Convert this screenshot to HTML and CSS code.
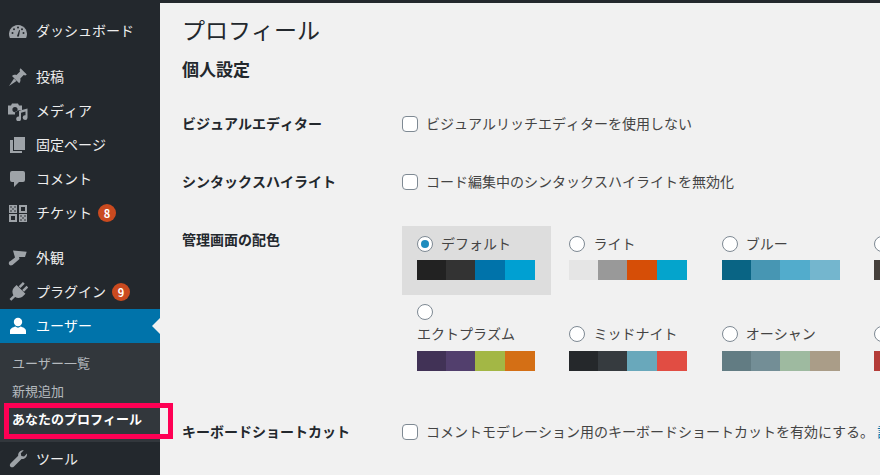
FILE: index.html
```html
<!DOCTYPE html>
<html lang="ja">
<head>
  <meta charset="UTF-8" />
  <meta name="viewport" content="width=device-width, initial-scale=1.0" />
  <title>プロフィール</title>
  <link rel="stylesheet" href="styles.css">
</head>
<body>
  <div class="topbar"></div>
  <div class="wrap">
    <ul class="sidemenu">
      <li class="menu-item gap-after">
        <svg class="icon" viewBox="0 0 20 20"><path d="M1.900 17A9 9 0 1 1 18.100 17Z"/><g class="hole"><circle cx="4.500" cy="12" r="1"/><circle cx="6" cy="8.200" r="1"/><circle cx="10" cy="6.500" r="1"/><circle cx="14" cy="8.200" r="1"/><circle cx="15.500" cy="12" r="1"/><path d="M9 15l2.200-6 .8.3-1 5.700a1.100 1.100 0 0 1-2 0z"/></g></svg>
        <span class="menu-text">ダッシュボード</span>
      </li>
      <li class="menu-item">
        <svg class="icon" viewBox="0 0 20 20"><path d="M12.500 1.200l6.300 6.300-1.500 1-1.600-.4-3.400 3.500c.5 2 0 3.500-1.100 4.600L4 9.100c1-1 2.700-1.500 4.500-1.100L12 4.500l-.4-1.600zM6 11.500l2.500 2.500L1 19z"/></svg>
        <span class="menu-text">投稿</span>
      </li>
      <li class="menu-item">
        <svg class="icon" viewBox="0 0 20 20"><path fill-rule="evenodd" d="M0 4.500h3L4 2.500h6l1 2h3V9h-2.500L7 11v2.500H0zM7 6a2.600 2.600 0 1 0 0 5.200A2.600 2.600 0 0 0 7 6z"/><path d="M11 9.800l8.500-2.300v9a2.400 2.400 0 1 1-2-2.300V10.600l-4.500 1.200v6a2.400 2.400 0 1 1-2-2.300z"/></svg>
        <span class="menu-text">メディア</span>
      </li>
      <li class="menu-item">
        <svg class="icon" viewBox="0 0 20 20"><path d="M6 2h11v13H6z"/><path d="M2 5h3v11h9v2H2z"/></svg>
        <span class="menu-text">固定ページ</span>
      </li>
      <li class="menu-item">
        <svg class="icon" viewBox="0 0 20 20"><path d="M4 2h11a2 2 0 0 1 2 2v7a2 2 0 0 1-2 2h-4l-5 5v-5H4a2 2 0 0 1-2-2V4a2 2 0 0 1 2-2z"/></svg>
        <span class="menu-text">コメント</span>
      </li>
      <li class="menu-item gap-after-small">
        <svg class="icon" viewBox="0 0 20 20"><path d="M1 2h8v8H1zM11 2h8v8h-8zM1 11h8v8H1zM11 11h8v8h-8z"/><g class="hole"><path d="M13 4h4v4h-4zM3 13h4v4H3z"/><circle cx="3" cy="4" r=".8"/><circle cx="7" cy="4" r=".8"/><circle cx="5" cy="6" r=".8"/><circle cx="3" cy="8" r=".8"/><circle cx="7" cy="8" r=".8"/><circle cx="13" cy="13" r=".8"/><circle cx="17" cy="13" r=".8"/><circle cx="15" cy="15" r=".8"/><circle cx="13" cy="17" r=".8"/><circle cx="17" cy="17" r=".8"/></g></svg>
        <span class="menu-text">チケット</span><span class="badge">8</span>
      </li>
      <li class="menu-item">
        <svg class="icon" viewBox="0 0 20 20"><path d="M5 2.500l13.700 1.200L17 9h-6l.5 2-7 6c-1.500 1-3.500.5-3.700-1.500-.1-1.500.7-2 1.700-2.500L7 9.500z"/></svg>
        <span class="menu-text">外観</span>
      </li>
      <li class="menu-item">
        <svg class="icon" viewBox="0 0 20 20"><g transform="rotate(45 10 10)"><path d="M6.500-.5H9v6H6.500zM11.500-.5H14v6h-2.500zM4 6h12.500v3.500c0 3-2.500 5.500-5 6V21H9v-5.500c-2.500-.5-5-3-5-6z"/></g></svg>
        <span class="menu-text">プラグイン</span><span class="badge">9</span>
      </li>
      <li class="menu-item active">
        <svg class="icon" viewBox="0 0 20 20"><circle cx="10" cy="6" r="4.200"/><path d="M2 18v-3c0-2.500 3-3.800 5.500-4.500 1.500 1.500 3.500 1.500 5 0C15 11.200 18 12.500 18 15v3z"/></svg>
        <span class="menu-text">ユーザー</span>
        <span class="arrow"></span>
      </li>
      <li class="submenu">
        <ul>
          <li>ユーザー一覧</li>
          <li>新規追加</li>
          <li class="current">あなたのプロフィール<span class="highlight"></span></li>
        </ul>
      </li>
      <li class="menu-item">
        <svg class="icon" viewBox="0 0 20 20"><path d="M19 4.500c.5 3-2 6-5.500 5.500L6 17.500c-1 1-2.500 1.200-3.500.2s-.8-2.500.2-3.500L10.200 6.700C9.800 3.500 12.500.8 15.800 1.200l-3 3 .5 2.800 2.800.5z"/></svg>
        <span class="menu-text">ツール</span>
      </li>
    </ul>

    <div class="content">
      <h1>プロフィール</h1>
      <h2>個人設定</h2>

      <div class="form-row">
        <div class="form-label">ビジュアルエディター</div>
        <div class="form-field"><span class="checkbox"></span>ビジュアルリッチエディターを使用しない</div>
      </div>

      <div class="form-row">
        <div class="form-label">シンタックスハイライト</div>
        <div class="form-field"><span class="checkbox"></span>コード編集中のシンタックスハイライトを無効化</div>
      </div>

      <div class="form-row form-row-picker">
        <div class="form-label">管理画面の配色</div>
        <div class="scheme-grid">
          <div class="scheme selected">
            <div class="scheme-head"><span class="radio checked"></span>デフォルト</div>
            <div class="swatch sw-default"></div>
          </div>
          <div class="scheme">
            <div class="scheme-head"><span class="radio"></span>ライト</div>
            <div class="swatch sw-light"></div>
          </div>
          <div class="scheme">
            <div class="scheme-head"><span class="radio"></span>ブルー</div>
            <div class="swatch sw-blue"></div>
          </div>
          <div class="scheme">
            <div class="scheme-head"><span class="radio"></span></div>
            <div class="swatch sw-coffee"></div>
          </div>
          <div class="scheme low">
            <div class="scheme-head wrapped"><span class="radio"></span>エクトプラズム</div>
            <div class="swatch sw-ectoplasm"></div>
          </div>
          <div class="scheme low">
            <div class="scheme-head"><span class="radio"></span>ミッドナイト</div>
            <div class="swatch sw-midnight"></div>
          </div>
          <div class="scheme low">
            <div class="scheme-head"><span class="radio"></span>オーシャン</div>
            <div class="swatch sw-ocean"></div>
          </div>
          <div class="scheme low">
            <div class="scheme-head"><span class="radio"></span></div>
            <div class="swatch sw-sunrise"></div>
          </div>
        </div>
      </div>

      <div class="form-row">
        <div class="form-label">キーボードショートカット</div>
        <div class="form-field"><span class="checkbox"></span>コメントモデレーション用のキーボードショートカットを有効にする。 <a href="#">詳</a></div>
      </div>
    </div>
  </div>
</body>
</html>
```

FILE: styles.css
```css
html, body {
  height: 475px;
  overflow: hidden;
}
body {
  margin: 0;
  background-color: #f1f1f1;
  color: #444;
  font-family: "Noto Sans CJK JP", "Noto Sans", sans-serif;
  font-size: 14px;
  font-kerning: none;
  line-height: 24px;
}
ul {
  list-style: none;
  margin: 0;
  padding: 0;
}
.topbar {
  height: 3px;
  background-color: #23282d;
}
.wrap {
  display: flex;
}

/* left menu */
.sidemenu {
  flex: 0 0 160px;
  height: 472px;
  padding-top: 11px;
  box-sizing: border-box;
  background-color: #23282d;
  color: #eee;
}
.menu-item {
  position: relative;
  display: flex;
  align-items: center;
  height: 34px;
  padding-left: 8px;
}
.menu-text {
  padding-bottom: 2px;
}
.gap-after {
  margin-bottom: 12px;
}
.gap-after-small {
  margin-bottom: 11px;
}
.icon {
  flex: none;
  width: 20px;
  height: 20px;
  margin-right: 8px;
  fill: #9ea3a8;
}
.icon .hole {
  fill: #23282d;
}
.badge {
  width: 18px;
  height: 18px;
  margin-left: 6px;
  border-radius: 50%;
  background-color: #ca4a1f;
  color: #fff;
  font-size: 11px;
  font-weight: 700;
  line-height: 18px;
  text-align: center;
}
.active {
  background-color: #0073aa;
  color: #fff;
}
.active .icon {
  fill: #fff;
}
.arrow {
  position: absolute;
  right: 0;
  top: 9px;
  border: 8px solid transparent;
  border-left-width: 0;
  border-right-color: #f1f1f1;
}
.submenu {
  padding: 7px 0 8px;
  background-color: #32373c;
  color: #b4b9be;
  font-size: 13px;
}
.submenu li {
  position: relative;
  height: 28px;
  padding-left: 12px;
  line-height: 26px;
}
.submenu .current {
  color: #fff;
  font-weight: 700;
}
.highlight {
  position: absolute;
  left: 4px;
  top: -3px;
  width: 169px;
  height: 36px;
  box-sizing: border-box;
  border: 5px solid #ff0054;
}

/* profile form */
.content {
  flex: 1;
  min-width: 0;
  padding: 14px 0 0 22px;
  white-space: nowrap;
}
h1 {
  margin: 0;
  color: #23282d;
  font-size: 23px;
  font-weight: 400;
  line-height: 24px;
}
h2 {
  margin: 16px 0 14px;
  color: #23282d;
  font-size: 17px;
  font-weight: 700;
  line-height: 24px;
}
.form-row {
  display: flex;
  padding: 16px 0 18px;
}
.form-row-picker {
  padding: 15px 0 17px;
}
.form-label {
  flex: 0 0 220px;
  color: #23282d;
  font-weight: 700;
}
.form-row-picker .form-label {
  padding-top: 1px;
}
.form-field {
  display: flex;
  align-items: center;
  white-space: pre;
}
.form-field a {
  color: #0073aa;
  text-decoration: none;
}
.checkbox {
  flex: none;
  width: 16px;
  height: 16px;
  margin: 2px 8px 0 0;
  box-sizing: border-box;
  border: 1px solid #7e8993;
  border-radius: 4px;
  background-color: #fff;
}
.radio {
  position: relative;
  flex: none;
  width: 16px;
  height: 16px;
  margin: 2px 8px 0 0;
  box-sizing: border-box;
  border: 1px solid #7e8993;
  border-radius: 50%;
  background-color: #fff;
}
.radio.checked::before {
  content: "";
  position: absolute;
  left: 3px;
  top: 3px;
  width: 8px;
  height: 8px;
  border-radius: 50%;
  background-color: #1e8cbe;
}

/* colour schemes */
.scheme-grid {
  display: grid;
  grid-template-columns: repeat(4, 149px);
  column-gap: 3.4px;
  row-gap: 3px;
}
.scheme {
  display: flex;
  flex-direction: column;
  justify-content: flex-end;
  padding: 6px 16px 15px 15px;
}
.scheme.selected {
  background-color: #ddd;
}
.scheme-head {
  display: flex;
  align-items: center;
  height: 24px;
  padding-bottom: 2px;
  box-sizing: border-box;
}
.scheme-head.wrapped {
  display: block;
  height: auto;
  padding-bottom: 1px;
}
.scheme-head.wrapped .radio {
  display: block;
  margin: 0 0 1px;
}
.swatch {
  height: 20px;
  margin-top: 4px;
}
.low .swatch {
  margin-top: 5px;
}
.sw-default {
  background: linear-gradient(90deg, #222 29px, #333 29px 58px, #0073aa 58px 88px, #00a0d2 88px);
}
.sw-light {
  background: linear-gradient(90deg, #e5e5e5 29px, #999 29px 58px, #d64e07 58px 88px, #04a4cc 88px);
}
.sw-blue {
  background: linear-gradient(90deg, #096484 29px, #4796b3 29px 58px, #52accc 58px 88px, #74b6ce 88px);
}
.sw-coffee {
  background: linear-gradient(90deg, #46403c 29px, #59524c 29px 58px, #c7a589 58px 88px, #9ea476 88px);
}
.sw-ectoplasm {
  background: linear-gradient(90deg, #413256 29px, #523f6d 29px 58px, #a3b745 58px 88px, #d46f15 88px);
}
.sw-midnight {
  background: linear-gradient(90deg, #25282b 29px, #363b3f 29px 58px, #69a8bb 58px 88px, #e14d43 88px);
}
.sw-ocean {
  background: linear-gradient(90deg, #627c83 29px, #738e96 29px 58px, #9ebaa0 58px 88px, #aa9d88 88px);
}
.sw-sunrise {
  background: linear-gradient(90deg, #b43c38 29px, #cf4944 29px 58px, #dd823b 58px 88px, #ccaf0b 88px);
}
```
